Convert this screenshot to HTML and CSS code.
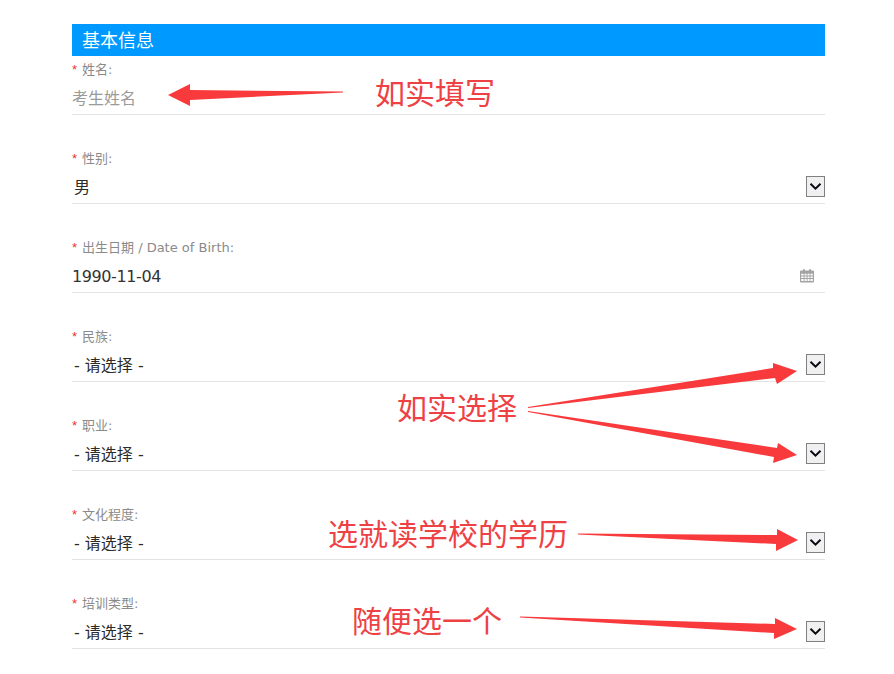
FILE: index.html
```html
<!DOCTYPE html>
<html lang="zh-CN">
<head>
<meta charset="utf-8">
<title>基本信息</title>
<link rel="stylesheet" href="styles.css">
</head>
<body>
<main class="form">
  <h2 class="form-title">基本信息</h2>
  <div class="field">
    <div class="field-label"><span class="req">*</span>姓名:</div>
    <div class="field-value placeholder">考生姓名</div>
  </div>
  <div class="field">
    <div class="field-label"><span class="req">*</span>性别:</div>
    <div class="field-value select-value"><span class="val-text">男</span>
      <span class="dd"><svg width="13" height="9" viewBox="0 0 13 9"><path d="M1.500 1.700l5 5 5-5" fill="none" stroke="#0a0a14" stroke-width="2"/></svg></span></div>
  </div>
  <div class="field">
    <div class="field-label"><span class="req">*</span>出生日期 / Date of Birth:</div>
    <div class="field-value date-value"><span class="date-text">1990-11-04</span>
      <svg class="cal" width="14" height="15" viewBox="0 0 14 15"><path fill="#a3a3a3" fill-rule="evenodd" d="M1 2.500h2V1.200h2v1.300h4V1.200h2v1.300h2a1 1 0 0 1 1 1V13.500a1 1 0 0 1-1 1H1a1 1 0 0 1-1-1V3.500a1 1 0 0 1 1-1zM1.200 5.800v1.700h2.400V5.800zm3.300 0v1.700h2.100V5.800zm3 0v1.700h2.100V5.800zm3 0v1.700h2.300V5.800zM1.200 8.400v1.700h2.400V8.400zm3.300 0v1.700h2.100V8.400zm3 0v1.700h2.100V8.400zm3 0v1.700h2.300V8.400zM1.200 11v1.900h2.400V11zm3.300 0v1.900h2.100V11zm3 0v1.900h2.100V11zm3 0v1.900h2.300V11z"/></svg></div>
  </div>
  <div class="field">
    <div class="field-label"><span class="req">*</span>民族:</div>
    <div class="field-value select-value"><span class="val-text">- 请选择 -</span>
      <span class="dd"><svg width="13" height="9" viewBox="0 0 13 9"><path d="M1.500 1.700l5 5 5-5" fill="none" stroke="#0a0a14" stroke-width="2"/></svg></span></div>
  </div>
  <div class="field">
    <div class="field-label"><span class="req">*</span>职业:</div>
    <div class="field-value select-value"><span class="val-text">- 请选择 -</span>
      <span class="dd"><svg width="13" height="9" viewBox="0 0 13 9"><path d="M1.500 1.700l5 5 5-5" fill="none" stroke="#0a0a14" stroke-width="2"/></svg></span></div>
  </div>
  <div class="field">
    <div class="field-label"><span class="req">*</span>文化程度:</div>
    <div class="field-value select-value"><span class="val-text">- 请选择 -</span>
      <span class="dd"><svg width="13" height="9" viewBox="0 0 13 9"><path d="M1.500 1.700l5 5 5-5" fill="none" stroke="#0a0a14" stroke-width="2"/></svg></span></div>
  </div>
  <div class="field">
    <div class="field-label"><span class="req">*</span>培训类型:</div>
    <div class="field-value select-value"><span class="val-text">- 请选择 -</span>
      <span class="dd"><svg width="13" height="9" viewBox="0 0 13 9"><path d="M1.500 1.700l5 5 5-5" fill="none" stroke="#0a0a14" stroke-width="2"/></svg></span></div>
  </div>
</main>

<svg class="arrows" width="894" height="674" viewBox="0 0 894 674">
  <g fill="#f93a3c">
    <path d="M343 91.500L190 90L190 84L168 95L190 106L190 100L343 92.500Z"/>
    <path d="M528 407L773 368L773 363L797 371L777 384L775 378L528 408Z"/>
    <path d="M528 411L777 448L778 443L797 455L773 463L774 457L528 412Z"/>
    <path d="M578 533.500L777 535L777 529L798 540L776 551L776 544L578 534.500Z"/>
    <path d="M520 616.500L775 624L775 618L797 629L774 639L774 633L520 617.500Z"/>
  </g>
</svg>
<div class="note note-a">如实填写</div>
<div class="note note-b">如实选择</div>
<div class="note note-c">选就读学校的学历</div>
<div class="note note-d">随便选一个</div>
</body>
</html>
```
FILE: styles.css
```css
* { box-sizing: border-box; }
html, body { margin: 0; height: 100%; overflow: hidden; background: #fff; }
body {
  position: relative;
  font-family: "DejaVu Sans", "Noto Sans CJK SC", sans-serif;
  color: #333;
}
.form { margin-top: 0; padding: 24px 69px 0 72px; }
.form-title {
  margin: 0;
  height: 32px;
  padding: 1px 0 0 10px;
  background: #0099ff;
  color: #fff;
  font-size: 18px;
  font-weight: 400;
  line-height: 31px;
}
.field { height: 59px; margin-bottom: 30px; border-bottom: 1px solid #e3e3e3; }
.field-label {
  height: 28px;
  color: #8a8a8a;
  font-size: 13px;
  line-height: 28px;
}
.req {
  display: inline-block;
  width: 10px;
  color: #e33;
  font-family: "Liberation Sans", sans-serif;
  font-size: 13px;
}
.field-value {
  display: flex;
  align-items: center;
  justify-content: space-between;
  height: 30px;
  font-size: 16px;
  line-height: 30px;
}
.placeholder { color: #9a9a9a; }
.val-text { padding-left: 2px; color: #2b2b2b; }
.date-text { letter-spacing: -0.4px; }
.cal { margin-right: 11px; margin-bottom: 4px; }
.dd {
  display: flex;
  align-items: center;
  justify-content: center;
  width: 19px;
  height: 21px;
  margin-top: -4px;
  background: #f0f0f0;
  border: 1px solid #808080;
}
.arrows { position: absolute; left: 0; top: 0; pointer-events: none; }
.note {
  position: absolute;
  color: #ee4144;
  font-family: "Noto Sans CJK SC", sans-serif;
  font-size: 30px;
  line-height: 40px;
  white-space: nowrap;
}
.note-a { left: 375px; top: 71px; }
.note-b { left: 397px; top: 386px; }
.note-c { left: 328px; top: 512px; }
.note-d { left: 352px; top: 599px; }
```
